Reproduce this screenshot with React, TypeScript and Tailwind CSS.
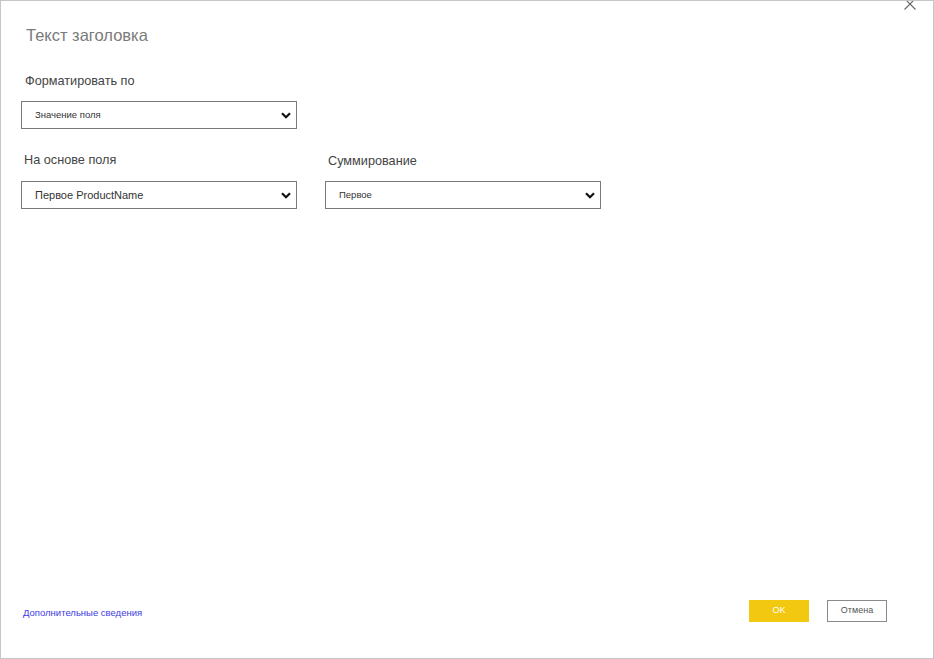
import { useState } from "react";

const font = { fontFamily: '"Liberation Sans", "Noto Sans", sans-serif' };

function Chevron() {
  return (
    <svg width="10" height="7" viewBox="0 0 10 7" className="shrink-0">
      <path d="M1 1.2 L5 5.2 L9 1.2" fill="none" stroke="#111" strokeWidth="2.2" />
    </svg>
  );
}

function Select({
  value,
  textClass,
}: {
  value: string;
  textClass: string;
}) {
  return (
    <div className="flex h-[28px] w-[276px] items-center justify-between border border-[#7a7a7a] bg-white pl-[13px] pr-[5px]">
      <span className={`text-[#333] ${textClass}`}>{value}</span>
      <Chevron />
    </div>
  );
}

export default function App() {
  const [open] = useState(true);
  if (!open) return null;

  return (
    <div style={font} className="relative flex h-[659px] w-[934px] flex-col overflow-hidden border border-[#c6c6c6] bg-white">
      <button type="button" className="absolute right-[16px] top-[-4px] text-[#666]" aria-label="Закрыть">
        <svg width="14" height="14" viewBox="0 0 14 14">
          <path d="M1.5 1.5 L12.5 12.5 M12.5 1.5 L1.5 12.5" stroke="#6b6b6b" strokeWidth="1.2" />
        </svg>
      </button>

      <h1 className="pl-[25px] pt-[24px] text-[16.5px] font-light leading-[20px] text-[#7a7a7a]">Текст заголовка</h1>

      <div className="mt-[28px] pl-[20px]">
        <div className="pl-[4px] text-[12.7px] leading-[16px] text-[#444]">Форматировать по</div>
        <div className="mt-[12px]">
          <Select value="Значение поля" textClass="text-[9.5px]" />
        </div>

        <div className="mt-[23px] flex gap-[28px]">
          <div>
            <div className="pl-[3px] text-[12.7px] leading-[16px] text-[#444]">На основе поля</div>
            <div className="mt-[13px]">
              <Select value="Первое ProductName" textClass="text-[11px]" />
            </div>
          </div>
          <div>
            <div className="pl-[3px] pt-[1px] text-[12.7px] leading-[16px] text-[#444]">Суммирование</div>
            <div className="mt-[12px]">
              <Select value="Первое" textClass="text-[9.5px]" />
            </div>
          </div>
        </div>
      </div>

      <div className="mt-auto flex items-center justify-between pb-[36px] pl-[22px] pr-[46px]">
        <a href="#" className="pt-[4px] text-[9.5px] text-[#3d3de0]">
          Дополнительные сведения
        </a>
        <div className="flex gap-[18px]">
          <button type="button" className="h-[22px] w-[60px] bg-[#f2c811] text-[9px] text-white">
            OK
          </button>
          <button type="button" className="h-[22px] w-[60px] border border-[#8a8a8a] bg-white text-[9px] text-[#555]">
            Отмена
          </button>
        </div>
      </div>
    </div>
  );
}
